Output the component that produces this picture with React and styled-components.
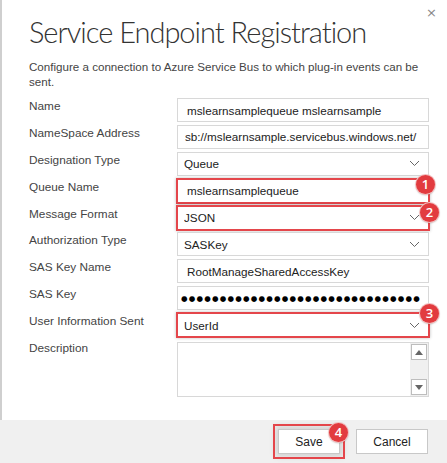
import React from "react";
import styled, { createGlobalStyle } from "styled-components";

const GlobalStyle = createGlobalStyle`
  html, body {
    margin: 0;
    padding: 0;
    background: #ffffff;
  }
  body {
    font-family: "Liberation Sans", Arial, sans-serif;
    color: #333;
  }
`;

const fields = [
  { label: "Name", value: "mslearnsamplequeue mslearnsample", pad: 9 },
  { label: "NameSpace Address", value: "sb://mslearnsample.servicebus.windows.net/", pad: 7 },
  { label: "Designation Type", value: "Queue", select: true },
  { label: "Queue Name", value: "mslearnsamplequeue", pad: 9, badge: { n: 1, top: -5, right: -7 } },
  { label: "Message Format", value: "JSON", select: true, badge: { n: 2, top: -4, right: -11 } },
  { label: "Authorization Type", value: "SASKey", select: true },
  { label: "SAS Key Name", value: "RootManageSharedAccessKey", pad: 9 },
  { label: "SAS Key", secret: true },
  { label: "User Information Sent", value: "UserId", select: true, badge: { n: 3, top: -10, right: -11 } },
];

export default function App() {
  return (
    <>
      <GlobalStyle />
      <Dialog>
        <Body>
          <TopBar>
            <Close>×</Close>
          </TopBar>
          <Title>Service Endpoint Registration</Title>
          <Intro>
            Configure a connection to Azure Service Bus to which plug-in events can be sent.
          </Intro>
          <Form>
            {fields.map((f) => (
              <React.Fragment key={f.label}>
                <Label>{f.label}</Label>
                <FieldBox $pad={f.select ? 6 : f.secret ? 3 : f.pad} $highlight={!!f.badge}>
                  {f.secret ? (
                    <Dots>{"●".repeat(31)}</Dots>
                  ) : (
                    <Value>{f.value}</Value>
                  )}
                  {f.select && (
                    <Chevron width="11" height="7" viewBox="0 0 11 7">
                      <path d="M1 1 L5.5 5.5 L10 1" fill="none" stroke="#666" strokeWidth="1" />
                    </Chevron>
                  )}
                  {f.badge && (
                    <Badge $top={f.badge.top} $right={f.badge.right}>
                      {f.badge.n}
                    </Badge>
                  )}
                </FieldBox>
              </React.Fragment>
            ))}
            <Label>Description</Label>
            <TextArea>
              <Scroll>
                <ScrollBtn>
                  <svg width="8" height="5" viewBox="0 0 8 5">
                    <path d="M0 5 L4 0 L8 5 Z" fill="#666" />
                  </svg>
                </ScrollBtn>
                <ScrollBtn>
                  <svg width="8" height="5" viewBox="0 0 8 5">
                    <path d="M0 0 L4 5 L8 0 Z" fill="#666" />
                  </svg>
                </ScrollBtn>
              </Scroll>
            </TextArea>
          </Form>
        </Body>
        <Footer>
          <Highlight>
            <Button $w={62}>Save</Button>
            <Badge $top={-6} $right={-8}>4</Badge>
          </Highlight>
          <Button $w={72}>Cancel</Button>
        </Footer>
      </Dialog>
    </>
  );
}

const Dialog = styled.div`
  width: 447px;
  height: 463px;
  display: flex;
  flex-direction: column;
  overflow: hidden;
`;

const Body = styled.div`
  flex: 1;
  border-left: 2px solid #cfcfcf;
  padding: 0 0 0 27px;
`;

const TopBar = styled.div`
  height: 14px;
  display: flex;
  justify-content: flex-end;
  padding: 6px 10px 0 0;
`;

const Close = styled.span`
  font-family: "DejaVu Sans", sans-serif;
  font-size: 13px;
  line-height: 14px;
  color: #888;
`;

const Title = styled.h1`
  margin: -6px 0 0 0;
  font-family: Lato, sans-serif;
  font-weight: 300;
  font-size: 29px;
  line-height: 36px;
  letter-spacing: -1px;
  color: #333;
`;

const Intro = styled.p`
  margin: 9px 0 0 0;
  width: 395px;
  font-size: 11.6px;
  line-height: 15px;
  color: #444;
`;

const Form = styled.div`
  margin-top: 9px;
  display: grid;
  grid-template-columns: 148px 252px;
  row-gap: 2.9px;
  align-items: start;
`;

const Label = styled.div`
  font-size: 11.8px;
  line-height: 15px;
  color: #444;
  padding-top: 1px;
`;

const FieldBox = styled.div`
  position: relative;
  box-sizing: border-box;
  height: 24px;
  border: 1px solid ${(p) => (p.$highlight ? "#e4464b" : "#d8d8d8")};
  outline: ${(p) => (p.$highlight ? "1px solid #e4464b" : "none")};
  box-shadow: ${(p) => (p.$highlight ? "0 0 3px 1px rgba(0,0,0,0.25)" : "none")};
  display: flex;
  align-items: center;
  padding-left: ${(p) => p.$pad}px;
  padding-right: 8px;
  background: #fff;
`;

const Value = styled.span`
  flex: 1;
  font-size: 11.7px;
  color: #222;
  white-space: nowrap;
  overflow: hidden;
`;

const Dots = styled.span`
  flex: 1;
  font-family: "DejaVu Sans", sans-serif;
  font-size: 7.5px;
  letter-spacing: 1.2px;
  color: #000;
  white-space: nowrap;
  overflow: hidden;
`;

const Chevron = styled.svg`
  flex: none;
`;

const Badge = styled.div`
  position: absolute;
  top: ${(p) => p.$top}px;
  right: ${(p) => p.$right}px;
  width: 19px;
  height: 19px;
  border-radius: 50%;
  background: #e23b3f;
  box-shadow: 0 0 0 1px #f3c0c0, 0 1px 2px rgba(0,0,0,0.35);
  color: #fff;
  font-family: "Open Sans", sans-serif;
  font-weight: 600;
  font-size: 13px;
  line-height: 19px;
  text-align: center;
`;

const TextArea = styled.div`
  box-sizing: border-box;
  height: 55px;
  margin-top: 2px;
  border: 1px solid #d8d8d8;
  display: flex;
  justify-content: flex-end;
`;

const Scroll = styled.div`
  width: 18px;
  background: #f0f0f0;
  display: flex;
  flex-direction: column;
  justify-content: space-between;
  align-items: center;
  padding: 1px 0;
`;

const ScrollBtn = styled.div`
  box-sizing: border-box;
  width: 16px;
  height: 16px;
  background: #fff;
  border: 1px solid #bdbdbd;
  display: flex;
  align-items: center;
  justify-content: center;
`;

const Footer = styled.div`
  height: 43px;
  flex: none;
  background: #f0f0f0;
  display: flex;
  justify-content: flex-end;
  align-items: center;
  gap: 16px;
  padding-right: 19px;
`;

const Highlight = styled.div`
  position: relative;
  outline: 2px solid #e4464b;
  outline-offset: 3px;
  box-shadow: 0 0 6px 3px rgba(0,0,0,0.12);
`;

const Button = styled.button`
  width: ${(p) => p.$w}px;
  height: 25px;
  background: #fff;
  border: 1px solid #c8c8c8;
  font-family: "Liberation Sans", sans-serif;
  font-size: 12px;
  color: #222;
  padding: 0;
  display: block;
`;
